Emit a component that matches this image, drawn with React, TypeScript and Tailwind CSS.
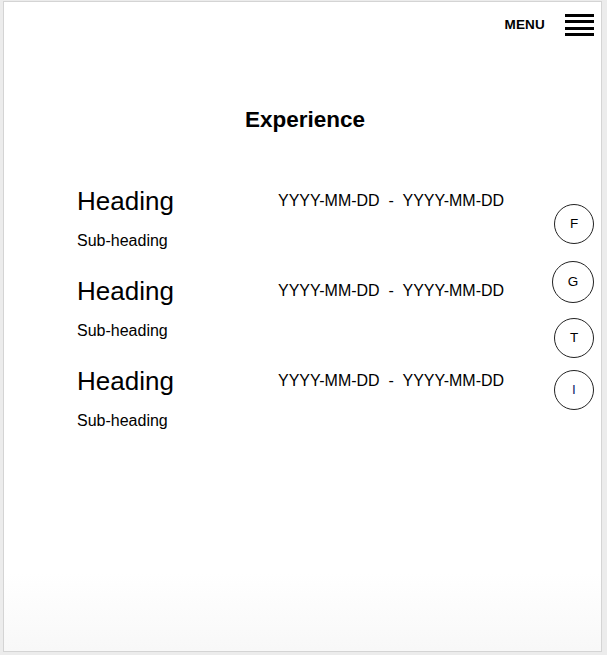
import React from "react";

const rows = [0, 1, 2];
const socials = [
  { l: "F", cls: "w-[40px] h-[40px] mt-0 ml-[2px] text-black" },
  { l: "G", cls: "w-[42px] h-[42px] mt-[17px] ml-0 text-black" },
  { l: "T", cls: "w-[40px] h-[40px] mt-[15px] ml-[2px] text-black" },
  { l: "I", cls: "w-[40px] h-[40px] mt-[12px] ml-[2px] text-[#0f2c6b]" },
];

export default function App() {
  return (
    <div
      className="w-[607px] h-[655px] bg-[#ececec] pl-[3px] pt-[1px] pr-[5px] pb-[3px]"
      style={{ fontFamily: '"Liberation Sans", Arial, sans-serif' }}
    >
      <div className="relative h-full border border-[#d4d4d4] bg-gradient-to-b from-white from-88% to-[#f8f8f8] text-black">
        <header className="flex justify-end items-center pt-[12px] pr-[7px]">
          <span className="font-bold text-[13.5px] leading-none tracking-[0.2px]">MENU</span>
          <div className="ml-[20px] flex flex-col gap-[3.3px] w-[29px]">
            <span className="block h-[3px] bg-black" />
            <span className="block h-[3px] bg-black" />
            <span className="block h-[3px] bg-black" />
            <span className="block h-[3px] bg-black" />
          </div>
        </header>

        <h1 className="mt-[73px] h-[23px] text-center font-bold text-[22.5px] leading-none pl-[5px]">
          Experience
        </h1>

        <div className="mt-[56px] pl-[73px] flex flex-col">
          {rows.map((i) => (
            <div key={i} className="h-[90px] flex flex-col">
              <div className="flex items-start">
                <div className="w-[201px] text-[26px] leading-none">Heading</div>
                <div className="mt-[5px] text-[16px] leading-none whitespace-pre">
                  {"YYYY-MM-DD  -  YYYY-MM-DD"}
                </div>
              </div>
              <div className="mt-[19px] text-[16px] leading-none">Sub-heading</div>
            </div>
          ))}
        </div>

        <div className="absolute left-[548px] top-[202px] flex flex-col">
          {socials.map((s) => (
            <div
              key={s.l}
              className={`${s.cls} rounded-full border border-[#222] flex items-center justify-center text-[13.5px] leading-none`}
            >
              {s.l}
            </div>
          ))}
        </div>
      </div>
    </div>
  );
}
